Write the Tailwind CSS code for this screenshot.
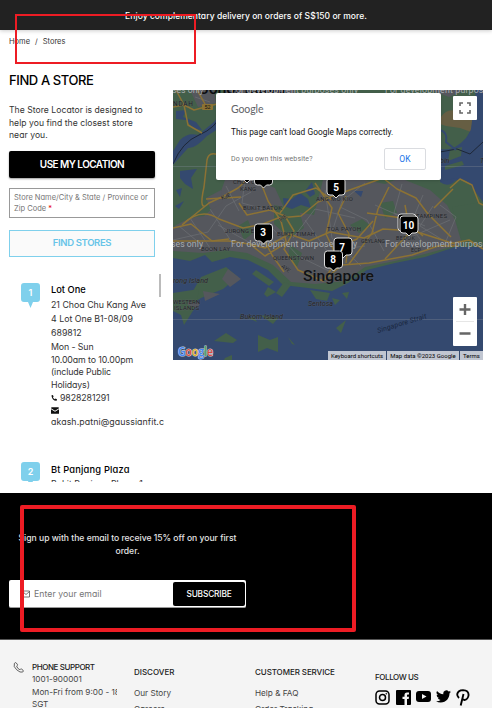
<!DOCTYPE html>
<html lang="en">
<head>
<meta charset="utf-8">
<title>Find a Store</title>
<script src="https://cdn.jsdelivr.net/npm/@tailwindcss/browser@4"></script>
</head>
<body class="relative w-[492px] h-[708px] overflow-hidden bg-white font-['Inter','Liberation_Sans',sans-serif] [font-feature-settings:'cv11'] text-[#333] whitespace-nowrap">
<header class="relative flex h-[30px] items-center justify-center bg-[#222] pt-[2px] text-[8.5px] font-medium tracking-[.05px] text-white shadow-[0_1px_4px_rgba(0,0,0,.2)]">Enjoy complementary delivery on orders of S$150 or more.</header>

<nav class="flex h-[23px] items-center gap-[5px] pl-[9px] text-[7.5px]"><span>Home</span><span>/</span><span>Stores</span></nav>

<main class="flex h-[440px]">
  <section class="w-[164px] shrink-0 pl-[9px]">
    <h1 class="mt-[18px] h-[18px] text-[13px] leading-[18px] font-medium tracking-[-.4px] text-black">FIND A STORE</h1>
    <p class="mt-[15px] text-[8.6px] leading-[12.5px] tracking-[.04px]">The Store Locator is designed to<br>help you find the closest store<br>near you.</p>
    <button class="mt-[9.5px] block h-[27px] w-[146px] rounded-[2px] bg-black text-[10px] font-semibold tracking-[-.55px] text-white shadow-[0_1px_2px_rgba(0,0,0,.4)]">USE MY LOCATION</button>
    <div class="mt-[10px] h-[30px] w-[146px] border border-[#999] pt-[3px] pl-[4px] text-[7.5px] leading-[11px] text-[#757575]">Store Name/City &amp; State / Province or<br>Zip Code <span class="text-red-600">*</span></div>
    <button class="mt-[12px] block h-[27px] w-[146px] border border-[#7fd0ec] bg-[#fafafa] text-[9.5px] font-semibold tracking-[-.35px] text-[#68c4e8]">FIND STORES</button>
    <div class="relative mt-[16px] h-[209px] w-[155px] overflow-hidden">
      <div class="absolute top-[1px] right-[3px] h-[23px] w-[2px] bg-[#bbb]"></div>
      <article class="flex h-[179px] pt-[10px] pl-[12px]">
        <svg class="h-[26px] w-[19px] shrink-0" viewBox="0 0 19 26"><path d="M3 0h13q3 0 3 3v13q0 3-3 3h-4l-2.500 6-2.500-6h-4q-3 0-3-3V3q0-3 3-3z" fill="#7fd0ec"/><text x="9.500" y="12.800" font-size="9" font-weight="600" fill="#fff" text-anchor="middle">1</text></svg>
        <div class="pl-[11px] text-[8.8px]">
          <h2 class="h-[14px] text-[9.3px] leading-[14px] font-medium text-black">Lot One</h2>
          <p class="pt-[1px] leading-[14px]">21 Choa Chu Kang Ave<br>4 Lot One B1-08/09<br>689812</p>
          <p class="pt-[1px] leading-[12.5px] tracking-[-.1px]">Mon - Sun<br>10.00am to 10.00pm<br>(include Public<br>Holidays)</p>
          <p class="flex h-[13px] items-center gap-[3px] tracking-[-.1px]"><svg class="size-[6px]" viewBox="0 0 16 16"><path d="M1 1l4-1 2 4-2 2q1 3 5 5l2-2 4 2-1 4Q4 16 1 1z" fill="#111"/></svg>9828281291</p>
          <p class="flex h-[12px] items-center"><svg class="h-[7px] w-[8px]" viewBox="0 0 16 13"><path d="M1 0h14l1 2-8 5-8-5z M0 4l8 5 8-5v9H0z" fill="#111"/></svg></p>
          <p class="leading-[12px] tracking-[.08px]">akash.patni@gaussianfit.com</p>
        </div>
      </article>
      <article class="flex pt-[10px] pl-[12px]">
        <svg class="h-[26px] w-[19px] shrink-0" viewBox="0 0 19 26"><path d="M3 0h13q3 0 3 3v13q0 3-3 3h-4l-2.500 6-2.500-6h-4q-3 0-3-3V3q0-3 3-3z" fill="#7fd0ec"/><text x="9.500" y="12.800" font-size="9" font-weight="600" fill="#fff" text-anchor="middle">2</text></svg>
        <div class="pl-[11px] text-[8.8px]">
          <h2 class="h-[15px] text-[9.300px] leading-[15px] font-medium tracking-[.18px] text-black">Bt Panjang Plaza</h2>
          <p class="leading-[14px]">Bukit Panjang Plaza, 1</p>
        </div>
      </article>
    </div>
  </section>

  <section class="relative mt-[37px] ml-[9px] h-[270px] w-[310px] shrink-0 overflow-hidden bg-[#344a70]">
    <svg class="block h-[270px] w-[310px] font-['Roboto',sans-serif]" viewBox="173 90 310 270">
      <rect x="173" y="90" width="310" height="270" fill="#34496f"/>
      <path d="M173 90H475Q480 98 473 110Q475 125 466 138Q455 151 440 150L440 182Q448 188 455 181Q464 176 471 186L483 202V247L455 247L425 257 395 263 367 270 348 283 332 291 308 288 283 285 268 270 248 260 230 257 212 262 205 255 190 261 173 258Z" fill="#435f4a"/>
      <!-- built-up districts -->
      <g fill="#55575d">
        <path d="M173 227Q190 216 204 216L216 205 225 180 250 177 275 188 285 210 314 215 323 180H365L385 184 400 178 430 190 447 205 455 220 462 244 425 254 395 261 365 267 345 281 315 284 291 282 273 265 247 253 225 250 203 253 173 251Z"/>
        <path d="M190 90h24l2 13-18 4zM225 90h70v6h-70zM206 198l15-8 2 12-12 8zM430 90h35l-16 7z"/>
      </g>
      <path d="M441 117Q447 108 456 111L474 109 471 132 460 128 446 126 440 124Z" fill="#665e43"/>
      <g fill="#435f4a">
        <path d="M274 205l25 5 5 18-15 10-15-14zM290 245l12 8-5 14-9-10zM350 225l12-6 9 7-12 7zM238 226l10-6 5 13-9 7zM380 203l13-2 4 12-12 5zM452 207l31-5v40l-20 3z"/>
        <path d="M201 277l25-10 12 10-15 12-22 9-14 9-4-8 10-8z"/>
        <path d="M173 293l26-4-3 17-12 19-3-10-8-4zM214 341l12-8 11 7-4 3zM258 335l12 5 8-3v15l-11-4-9 4zM288 337l7 8-3-1zM225 358l7-3v5h-8zM248 318l6-1 3 5zM260 315l18 3-5 6zM310 290l20 3-3 8-11-2zM336 328l10-8-5 13zM332 298l8 2-5 5zM342 293l7-1-2 7z"/>
      </g>
      <g fill="#55575d"><path d="M228 269l13 10-11 8-8-8zM188 302l12 1-2 5-10-3zM203 291l17 3-15 7z"/></g>
      <g fill="#435f4a"><path d="M252 274l4-4 18 12-5 4zM268 287l8 5-9 5-3-3zM284 282l7 3-9 12-6-4z"/></g>
      <!-- inland waters -->
      <g fill="#34496f">
        <path d="M173 151L180 140Q188 132 198 135L214 122 221 112V127L207 136Q195 149 188 148L173 165ZM176 111l10-1-3 7 13 5 6 8-8-1-8-9-10-1zM180 171l17-2-6 9 2 11-8-5-5-6zM283 198l9 1 8-6 8 6 3 9-10-3-9 4-8-3zM305 191l7-9 3 12-5 3zM354 191h9l-2 6zM176 190l6-2-2 9zM175 206l9-5-5 8z"/>
        <path d="M440 149Q463 154 471 129L476 90H483V199L469 181 455 178 440 182Z"/>
      </g>
      <path d="M450 150l12-3-1 9-13 5zM445 166l17-5 2 4-19 5z" fill="#435f4a"/>
      <path d="M173 164Q182 142 199 135T222 113M440 152L457 149 470 154 483 142" fill="none" stroke="#1d2737" stroke-width="1"/>
      <path d="M440 130q8 2 6 12l10 8" fill="none" stroke="#34496f" stroke-width="2"/>
      <!-- minor roads -->
      <g fill="none" stroke="#6d7074" stroke-width=".7">
        <path d="M173 240l35-8 18-26 25-14M179 226l24 20M190 218l22 33M210 209l25 38M226 186l13 25M245 180l-3 23 29 8M218 225l36 20 30-6M273 229l25 27 35 17M293 238l22-29 40 9M305 220l22 31 38-5M325 190l7 48 29 28M365 183l-23 18-10 31M340 207l27 13 17 31M375 205l27 12 24 29M402 184l-8 29 31 13M423 195l-19 45 46-20M433 206l-13 20 26 16M195 97l15 5M440 205l16 12-12 29"/>
      </g>
      <!-- expressways -->
      <g fill="none" stroke="#8c7234" stroke-width="1.500" stroke-linejoin="round">
        <path d="M173 107L184 105 194 110 217 104M176 90l8 15 4 20 14 8M197 90l8 14"/>
        <path d="M182 225L209 203Q225 196 238 188L250 177M209 203Q198 214 204 187L207 160Q209 151 218 155"/>
        <path d="M173 241H229L249 244 265 248 289 234 309 241 330 232 364 238 383 229 414 231 455 244"/>
        <path d="M183 224Q201 207 219 219L243 228 263 224 278 218 301 216 318 202 333 196 358 187 383 178 397 189 416 198 428 214 451 237"/>
        <path d="M239 203L247 215 270 210 285 216 294 231 284 249 298 270 323 281 342 265 369 263 412 255 438 246 458 246"/>
        <path d="M261 183l7 18 13 20 6 24M280 213l13-18 23-7 16 12M315 183l17 25-6 26 12 25-15 22M346 196l-8 17 11 21-3 29M389 187l-11 22-6 24-23 31M367 213l35 5 21 18M405 205l5 27-25 27M373 221l-16 18-20 8M450 188l10-9 12 6 7 18 4 2M434 208l19-19M449 244l20-4 14 9M260 232l12 23 12 17M250 244l15 12 21-13M206 199l35-2M173 228l18-4 21 17 17-2"/>
      </g>
      <path d="M173 166.500H483M173 319.500H483" stroke="#7f8a94" stroke-width=".6" opacity=".6"/>
      <!-- place names -->
      <g fill="#1f2126" stroke="#65696c" stroke-opacity=".6" stroke-width=".6" paint-order="stroke" font-size="6">
        <text x="173" y="105.500" font-size="6.500" textLength="20">NDAH</text>
        <text x="233" y="184" textLength="22">CHOA C</text><text x="240" y="190.500" textLength="16">KANG</text>
        <text x="243" y="209.500" textLength="39">BUKIT BATOK</text><text x="316" y="201" textLength="37">ANG MO KIO</text>
        <text x="416" y="218" textLength="31">TAMPINES</text><text x="225" y="232.500" textLength="31">JURONG E.</text>
        <text x="277" y="235.500" textLength="38">BUKIT TIMAH</text><text x="327" y="231" textLength="34">TOA PAYOH</text>
        <text x="201" y="251" textLength="29">BOON LAY</text><text x="273" y="260" textLength="41">QUEENSTOWN</text>
        <text x="361" y="243" font-size="5.500" textLength="24">GEYLANG</text><text x="396" y="240" font-size="5.500" textLength="19">BEDOK</text>
        <text x="173" y="304" textLength="27">WESTERN</text><text x="174" y="309.500" textLength="25">ISLANDS</text>
        <text x="411" y="252" textLength="10" font-size="5.500">ECP</text><text transform="translate(222 200) rotate(-23)" font-size="5.500">KJE</text><text transform="translate(281 222) rotate(-37)" font-size="5.500">PIE</text><text transform="translate(281 267) rotate(38)" font-size="5.500">AYE</text>
        <g font-style="italic" font-size="7.200"><text x="173" y="283" textLength="35">rong Island</text><text x="240" y="319" textLength="43">Bukom Island</text><text x="308" y="306" textLength="25">Sentosa</text><text x="440" y="163">bin</text><text x="480" y="163">T</text></g>
      </g>
      <text transform="translate(378 333) rotate(-17)" font-size="7" font-style="italic" fill="#18253c" textLength="51">Singapore Strait</text>
      <rect x="202" y="104" width="11" height="6" rx="1" fill="#8c7234"/><text x="204.500" y="109" font-size="5.500" fill="#111">52</text>
      <text x="200" y="94" font-size="16" font-weight="500" fill="#0c0e10" textLength="86">Johor Bahru</text>
      <text x="303" y="281" font-size="15.500" font-weight="500" fill="#101215" stroke="#5d6065" stroke-width=".5" paint-order="stroke" textLength="71" lengthAdjust="spacingAndGlyphs">Singapore</text>
      <g font-size="8.700" fill="#a9adb1"><text x="172" y="93">ses only</text><text x="231" y="93" textLength="127">For development purposes only</text><text x="385" y="93" textLength="127">For development purposes only</text><text x="171" y="246.500" textLength="32">ses only</text><text x="231" y="246.500" textLength="126">For development purposes only</text><text x="385" y="246.500" textLength="126">For development purposes only</text></g>
      <!-- store markers -->
      <defs><path id="pin" d="M-6-9H6Q9-9 9-6V5Q9 8 6 8H3L0 11-3 8H-6Q-9 8-9 5V-6Q-9-9-6-9Z" fill="#000" stroke="#ddd" stroke-width="1"/></defs>
      <use href="#pin" x="247" y="172"/><use href="#pin" x="263.500" y="177"/><use href="#pin" x="336" y="187"/><use href="#pin" x="263.500" y="233"/><use href="#pin" x="343" y="247"/><use href="#pin" x="333.500" y="260"/><use href="#pin" x="407" y="223"/><use href="#pin" x="409" y="225"/>
      <g fill="#fff" font-size="10" font-weight="700" text-anchor="middle"><text x="336" y="190.500">5</text><text x="263" y="236">3</text><text x="342" y="250.500">7</text><text x="333" y="263">8</text><text x="408.500" y="229">10</text></g>
      <text x="178" y="356" font-family="Open Sans" font-size="12" font-weight="600" stroke="#c8cdd6" stroke-width="1.200" paint-order="stroke" textLength="35" lengthAdjust="spacingAndGlyphs"><tspan fill="#4285f4">G</tspan><tspan fill="#dc4a3d">o</tspan><tspan fill="#e3ad22">o</tspan><tspan fill="#4285f4">g</tspan><tspan fill="#3ca257">l</tspan><tspan fill="#dc4a3d">e</tspan></text>
    </svg>
    <div class="absolute top-[3px] left-[43px] flex h-[87px] w-[225px] flex-col rounded-[2px] bg-white pl-[15px] font-['Roboto',sans-serif] shadow">
      <div class="mt-[8px] h-[16px] font-['Lato',sans-serif] text-[10.500px] leading-[16px] tracking-[-.1px] text-[#5f6368]">Google</div>
      <div class="mt-[9px] h-[12px] text-[8.300px] leading-[12px] tracking-[.05px] text-[#111]">This page can't load Google Maps correctly.</div>
      <div class="mt-[10px] flex items-center justify-between pr-[15px] text-[7px] tracking-[.12px] text-[#757575]">Do you own this website?<button class="h-[22px] w-[42px] rounded-[2px] border border-[#dadce0] text-[8.500px] text-[#1a73e8]">OK</button></div>
    </div>
    <div class="absolute top-[6px] right-[6px] grid size-[24px] place-items-center rounded-[1px] bg-white"><svg class="size-[12px]" viewBox="0 0 12 12" fill="none" stroke="#666" stroke-width="1.600"><path d="M4 1H1V4M8 1h3v3M1 8v3h3M11 8v3H8"/></svg></div>
    <div class="absolute right-[6px] bottom-[14px] flex h-[49px] w-[24px] flex-col items-center rounded-[1px] bg-white"><svg class="h-[49px] w-[24px]" viewBox="0 0 24 49" stroke="#666" stroke-width="2.400"><path d="M6.500 12.500H17.500M12 7v11M6.500 36.500H17.500"/><path d="M3 24.500H21" stroke="#e6e6e6" stroke-width="1"/></svg></div>
    <div class="absolute right-0 bottom-0 flex h-[9px] gap-[1px] font-['Roboto',sans-serif] text-[6px] leading-[9px] text-black"><span class="w-[58px] bg-[#c1c6d1] text-center">Keyboard shortcuts</span><span class="w-[72px] bg-[#c1c6d1] text-center">Map data ©2023 Google</span><span class="w-[23px] bg-[#c1c6d1] text-center">Terms</span></div>
  </section>
</main>

<section class="h-[147px] border-b border-[#555] bg-black pl-[9px]">
  <p class="w-[237px] pt-[39px] text-center text-[8.600px] leading-[13px] font-medium tracking-[-.02px] text-[#e4e4e4]">Sign up with the email to receive 15% off on your first<br>order.</p>
  <form class="mt-[22px] flex h-[28px] w-[237px] items-center rounded-[2px] border-b border-[#999] bg-white pr-[1px] pl-[13px]">
    <svg class="size-[8px]" viewBox="0 0 8 8" fill="none" stroke="#555" stroke-width=".8"><path d="M.5 1h7v6h-7zM.5 1.500L4 4.500 7.500 1.500"/></svg>
    <span class="ml-[4px] flex-1 pt-[2px] text-[8.700px] tracking-[.05px] text-[#757575]">Enter your email</span>
    <button type="button" class="h-[24px] w-[72px] rounded-[2px] bg-black pt-[1px] text-[8.300px] font-medium tracking-[-.15px] text-white">SUBSCRIBE</button>
  </form>
</section>

<footer class="flex h-[68px] overflow-hidden bg-[#f4f4f4] text-[8.200px] text-[#444]">
  <section class="flex w-[134px] pt-[21px] pl-[13px]">
    <svg class="mt-[1px] size-[11px] shrink-0" viewBox="0 0 12 12" fill="none" stroke="#444" stroke-width=".9"><path d="M1.500 1.500Q3 0 3.500 1L5 3Q5 4 4 4.500 4.500 7 7.500 8.500 8 7.500 9 7.500L11 9Q12 9.500 10.500 11 8 12 4 8.500T1.500 1.500Z"/></svg>
    <div class="ml-[8px] w-[85px] overflow-hidden leading-[12.400px]"><h3 class="text-[8px] font-medium tracking-[-.42px] text-[#222]">PHONE SUPPORT</h3>1001-900001<br>Mon-Fri from 9:00 - 18:00<br>SGT</div>
  </section>
  <section class="w-[121px] pt-[26px]"><h3 class="h-[12px] text-[8px] leading-[12px] font-medium text-[#222]">DISCOVER</h3><p class="mt-[7px] leading-[16px]">Our Story<br>Careers</p></section>
  <section class="w-[120px] pt-[26px]"><h3 class="h-[12px] text-[8px] leading-[12px] font-medium tracking-[-.08px] text-[#222]">CUSTOMER SERVICE</h3><p class="mt-[7px] leading-[16px]">Help &amp; FAQ<br>Order Tracking</p></section>
  <section class="pt-[31px]"><h3 class="h-[12px] text-[8px] leading-[12px] font-medium tracking-[-.4px] text-[#222]">FOLLOW US</h3>
    <div class="mt-[6px] flex items-center gap-[5px]">
      <svg class="size-[15px]" viewBox="0 0 15 15" fill="none" stroke="#000" stroke-width="1.500"><rect x="1" y="1" width="13" height="13" rx="3.500"/><circle cx="7.500" cy="7.500" r="3"/><circle cx="11.300" cy="3.700" r=".5" fill="#000" stroke-width=".5"/></svg>
      <svg class="ml-[1px] size-[15px]" viewBox="0 0 15 15"><rect width="15" height="15" rx="1"/><path d="M8.500 15V9h-2V6.700h2V5Q8.500 2.400 11 2.400h2v2.200h-1.300Q11 4.600 11 5.400v1.300h2L12.700 9H11v6z" fill="#f4f4f4"/></svg>
      <svg class="h-[15px] w-[15px]" viewBox="0 0 15 15"><rect y="1" width="15" height="11" rx="3"/><path d="M6 4l4.500 2.500L6 9z" fill="#f4f4f4"/></svg>
      <svg class="mb-[2px] size-[15px]" viewBox="0 0 24 24"><path d="M23.950 4.570a10 10 0 0 1-2.820.78 4.960 4.960 0 0 0 2.160-2.730c-.95.560-2 .960-3.130 1.190a4.920 4.920 0 0 0-8.380 4.480C7.690 8.090 4.070 6.130 1.640 3.160a4.920 4.920 0 0 0 1.520 6.570 4.900 4.900 0 0 1-2.230-.61v.06a4.920 4.920 0 0 0 3.950 4.830 5 5 0 0 1-2.210.08 4.940 4.940 0 0 0 4.600 3.420A9.870 9.870 0 0 1 0 19.540a14 14 0 0 0 7.550 2.210c9.050 0 14-7.500 14-13.980 0-.21 0-.42-.02-.63a9.940 9.940 0 0 0 2.460-2.550z"/></svg>
      <svg class="h-[17px] w-[14px]" viewBox="0 0 14 17" fill="none" stroke="#000" stroke-width="1.900"><path d="M3 9Q1 7 1.200 5.200 2 1.200 7 1.100 12.600 1.300 12.600 6 12 10.600 8.500 11 6.800 10.800 6.300 9.600M7.500 5L4.700 16.500"/></svg>
    </div>
  </section>
</footer>
<div class="pointer-events-none absolute top-[14px] left-[15px] h-[50px] w-[181px] border-2 border-[#ed1c24]"></div>
<div class="pointer-events-none absolute top-[505px] left-[20px] h-[127px] w-[336px] rounded-[2px] border-4 border-[#ed1c24]"></div>
</body>
</html>
